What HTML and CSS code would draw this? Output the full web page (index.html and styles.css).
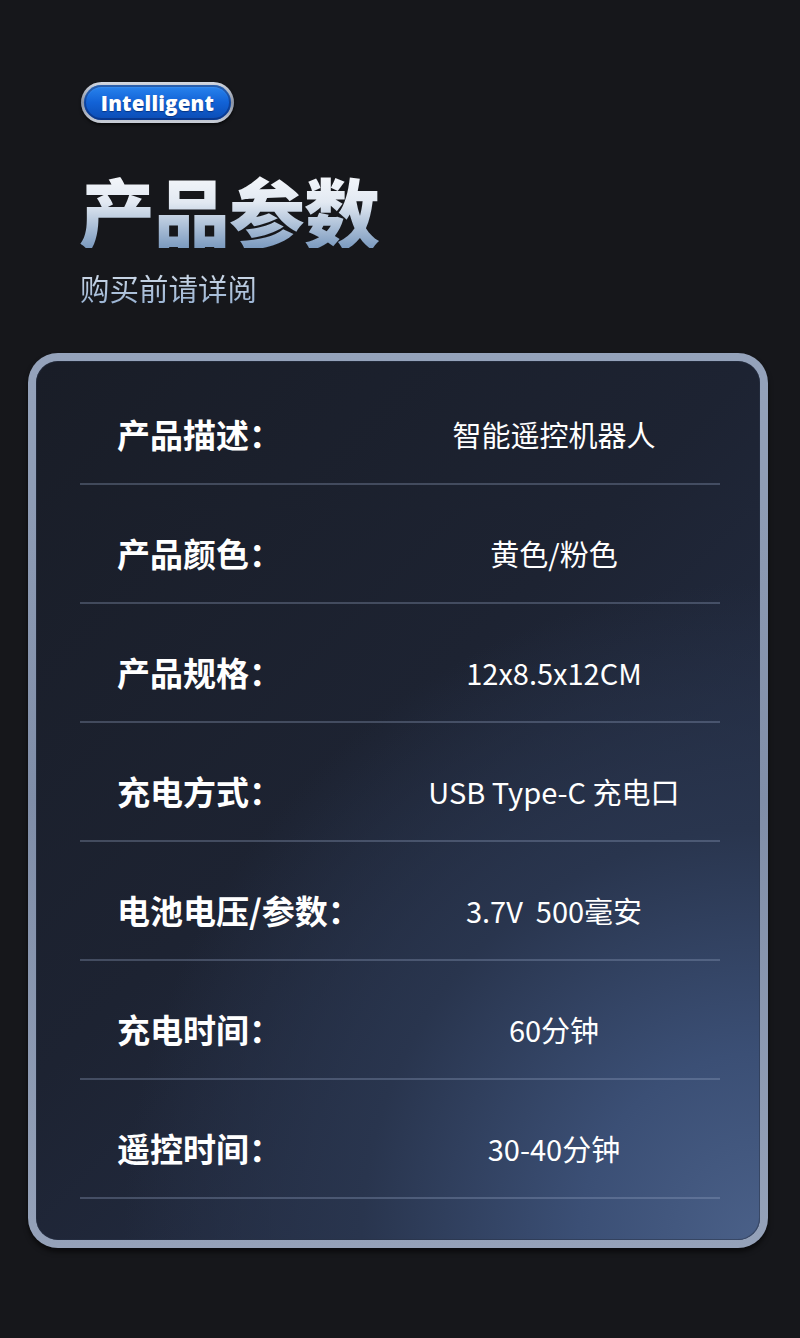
FILE: index.html
```html
<!DOCTYPE html>
<html lang="zh-CN">
<head>
<meta charset="utf-8">
<title>产品参数</title>
<link rel="stylesheet" href="styles.css">
</head>
<body>
<div class="page">
  <header class="head">
    <div class="badge"><span class="badge-inner">Intelligent</span></div>
    <h1 class="title">产品参数</h1>
    <p class="subtitle">购买前请详阅</p>
  </header>
  <section class="card">
    <div class="row"><span class="label">产品描述：</span><span class="value">智能遥控机器人</span></div>
    <div class="row"><span class="label">产品颜色：</span><span class="value">黄色/粉色</span></div>
    <div class="row"><span class="label">产品规格：</span><span class="value">12x8.5x12CM</span></div>
    <div class="row"><span class="label">充电方式：</span><span class="value">USB Type-C 充电口</span></div>
    <div class="row"><span class="label">电池电压/参数：</span><span class="value">3.7V&nbsp;&nbsp;500毫安</span></div>
    <div class="row"><span class="label">充电时间：</span><span class="value">60分钟</span></div>
    <div class="row"><span class="label">遥控时间：</span><span class="value">30-40分钟</span></div>
  </section>
</div>
</body>
</html>
```
FILE: styles.css
```css
html, body {
  margin: 0;
  padding: 0;
  background: #16171b;
}
body {
  font-family: "Noto Sans CJK SC", "Noto Sans", sans-serif;
  color: #fff;
  width: 800px;
  height: 1338px;
  overflow: hidden;
}
.page {
  padding-top: 82px;
}
.head {
  padding-left: 81px;
  display: flex;
  flex-direction: column;
  align-items: flex-start;
}
.badge {
  height: 41px;
  width: 153px;
  box-sizing: border-box;
  border-radius: 21px;
  padding: 3px;
  background: linear-gradient(180deg, #d4d9e2 0%, #8b93a3 50%, #c9ced8 100%);
  box-shadow: 0 2px 3px rgba(0,0,0,0.6);
}
.badge-inner {
  display: flex;
  align-items: center;
  justify-content: center;
  height: 100%;
  border-radius: 18px;
  background: linear-gradient(180deg, #2a86f0 0%, #1262d6 50%, #0b4cb4 100%);
  box-shadow: inset 0 0 0 2px rgba(10,40,110,0.55), inset 0 2px 2px rgba(140,200,255,0.5);
  font-family: "Open Sans", "Liberation Sans", sans-serif;
  font-weight: 800;
  font-size: 20.5px;
  letter-spacing: 0.2px;
  color: #fff;
  text-shadow: 0 1px 1px rgba(0,30,90,0.6);
}
.title {
  margin: 49px 0 0 -2px;
  font-size: 76px;
  line-height: 76px;
  font-weight: 900;
  letter-spacing: -1px;
  background: linear-gradient(180deg, #f6f8fb 0%, #e2e9f2 40%, #7b9abf 100%);
  -webkit-background-clip: text;
  background-clip: text;
  color: transparent;
}
.subtitle {
  margin: 22px 0 0 -1px;
  font-size: 29.5px;
  line-height: 34px;
  font-weight: 400;
  background: linear-gradient(180deg, #d4deea 0%, #98b2d2 100%);
  -webkit-background-clip: text;
  background-clip: text;
  color: transparent;
}
.card {
  margin: 49px 0 0 28px;
  width: 740px;
  box-sizing: border-box;
  border: 8px solid transparent;
  border-radius: 30px;
  padding: 5px 40px 41px 44px;
  background:
    radial-gradient(ellipse 100% 85% at 100% 100%, #4a6088 0%, #3b4f75 25%, #29354e 55%, rgba(28,34,48,0) 88%) padding-box,
    linear-gradient(135deg, #191d27 0%, #1d2332 45%, #283450 100%) padding-box,
    linear-gradient(180deg, #95a3bb 0%, #808ea8 50%, #95a2b9 100%) border-box;
  box-shadow: 0 4px 5px rgba(0,0,0,0.55), inset 0 0 0 1px rgba(40,50,70,0.5);
}
.row {
  display: grid;
  grid-template-columns: 308px 1fr;
  align-items: center;
  height: 119px;
  box-sizing: border-box;
  padding: 48px 0 29px;
  border-bottom: 2px solid rgba(150,165,195,0.32);
}
.label {
  padding-left: 37px;
  font-size: 33px;
  line-height: 40px;
  font-weight: 700;
  color: #fff;
  white-space: nowrap;
}
.value {
  text-align: center;
  font-size: 29px;
  line-height: 40px;
  font-weight: 400;
  color: #fff;
  white-space: nowrap;
}
```
